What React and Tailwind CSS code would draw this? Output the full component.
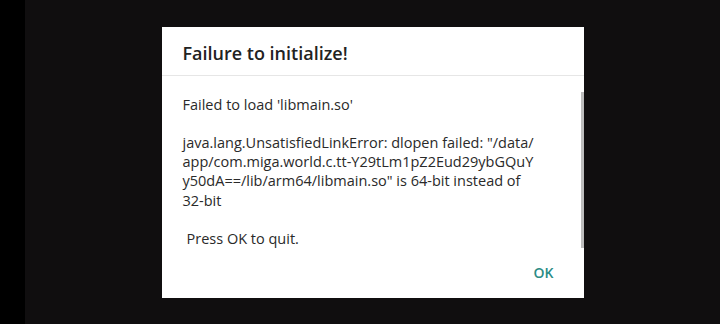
export default function App() {
  return (
    <div className="flex h-[324px] w-[720px] overflow-hidden bg-[#100e0f]" style={{ fontFamily: '"Open Sans", "Noto Sans", sans-serif' }}>
      <div className="w-[25px] shrink-0 bg-black" />
      <div className="flex flex-1 items-center justify-center">
        <div className="flex h-[271px] w-[422px] flex-col bg-white">
          <div className="flex h-[49px] shrink-0 items-center border-b border-[#e6e6e6] pl-[21px] pt-[5px] text-[18px] font-semibold text-[#222]">
            Failure to initialize!
          </div>
          <div className="relative flex-1 overflow-hidden">
            <div className="pl-[21px] pr-[20px] pt-[19px] text-[14.5px] leading-[19.2px] text-[#2a2a2a]">
              <p>Failed to load 'libmain.so'</p>
              <p className="mt-[19.2px]">
                java.lang.UnsatisfiedLinkError: dlopen failed: "/data/
                <br />
                app/com.miga.world.c.tt-Y29tLm1pZ2Eud29ybGQuY
                <br />
                y50dA==/lib/arm64/libmain.so" is 64-bit instead of
                <br />
                32-bit
              </p>
              <p className="mt-[19.2px] pl-[4px]">Press OK to quit.</p>
            </div>
            <div className="absolute right-0 top-[16px] h-[156px] w-[3px] bg-[#bdbdbd]" />
          </div>
          <div className="flex h-[50px] shrink-0 items-center justify-end pr-[30px]">
            <span className="text-[14px] font-semibold text-[#2b8c85]">OK</span>
          </div>
        </div>
      </div>
    </div>
  );
}
